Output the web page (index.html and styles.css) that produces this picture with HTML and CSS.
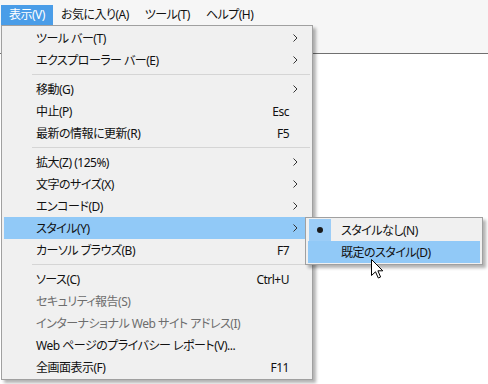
FILE: index.html
```html
<!DOCTYPE html>
<html lang="ja">
<head>
    <meta charset="UTF-8">
    <title>表示メニュー</title>
    <link rel="stylesheet" href="styles.css">
</head>
<body>
    <div class="chrome">
        <div class="menubar">
            <div class="menubar-item open">表示(V)</div>
            <div class="menubar-item">お気に入り(A)</div>
            <div class="menubar-item">ツール(T)</div>
            <div class="menubar-item">ヘルプ(H)</div>
        </div>
    </div>
    <div class="content"></div>

    <!-- 表示 dropdown -->
    <div class="menu main-menu">
        <div class="item"><span class="label">ツール バー(T)</span><span class="arrow"><svg width="5" height="8" viewBox="0 0 5 8"><path d="M0.5 0.5 L4 4 L0.5 7.5" fill="none" stroke="#333" stroke-width="1"/></svg></span></div>
        <div class="item"><span class="label">エクスプローラー バー(E)</span><span class="arrow"><svg width="5" height="8" viewBox="0 0 5 8"><path d="M0.5 0.5 L4 4 L0.5 7.5" fill="none" stroke="#333" stroke-width="1"/></svg></span></div>
        <div class="sep"></div>
        <div class="item"><span class="label">移動(G)</span><span class="arrow"><svg width="5" height="8" viewBox="0 0 5 8"><path d="M0.5 0.5 L4 4 L0.5 7.5" fill="none" stroke="#333" stroke-width="1"/></svg></span></div>
        <div class="item"><span class="label">中止(P)</span><span class="key">Esc</span><span class="arrow"></span></div>
        <div class="item"><span class="label">最新の情報に更新(R)</span><span class="key">F5</span><span class="arrow"></span></div>
        <div class="sep"></div>
        <div class="item"><span class="label">拡大(Z) (125%)</span><span class="arrow"><svg width="5" height="8" viewBox="0 0 5 8"><path d="M0.5 0.5 L4 4 L0.5 7.5" fill="none" stroke="#333" stroke-width="1"/></svg></span></div>
        <div class="item"><span class="label">文字のサイズ(X)</span><span class="arrow"><svg width="5" height="8" viewBox="0 0 5 8"><path d="M0.5 0.5 L4 4 L0.5 7.5" fill="none" stroke="#333" stroke-width="1"/></svg></span></div>
        <div class="item"><span class="label">エンコード(D)</span><span class="arrow"><svg width="5" height="8" viewBox="0 0 5 8"><path d="M0.5 0.5 L4 4 L0.5 7.5" fill="none" stroke="#333" stroke-width="1"/></svg></span></div>
        <div class="item active"><span class="label">スタイル(Y)</span><span class="arrow"><svg width="5" height="8" viewBox="0 0 5 8"><path d="M0.5 0.5 L4 4 L0.5 7.5" fill="none" stroke="#333" stroke-width="1"/></svg></span></div>
        <div class="item"><span class="label">カーソル ブラウズ(B)</span><span class="key">F7</span><span class="arrow"></span></div>
        <div class="sep"></div>
        <div class="item"><span class="label">ソース(C)</span><span class="key">Ctrl+U</span><span class="arrow"></span></div>
        <div class="item disabled"><span class="label">セキュリティ報告(S)</span><span class="arrow"></span></div>
        <div class="item disabled"><span class="label">インターナショナル Web サイト アドレス(I)</span><span class="arrow"></span></div>
        <div class="item"><span class="label">Web ページのプライバシー レポート(V)...</span><span class="arrow"></span></div>
        <div class="item"><span class="label">全画面表示(F)</span><span class="key">F11</span><span class="arrow"></span></div>
    </div>

    <!-- スタイル submenu -->
    <div class="menu sub-menu">
        <div class="subitem"><span class="check on"><span class="dot"></span></span><span class="label">スタイルなし(N)</span></div>
        <div class="subitem active"><span class="check"></span><span class="label">既定のスタイル(D)</span></div>
    </div>

    <svg class="cursor" width="13" height="20" viewBox="0 0 13 20">
        <path d="M0.5 0.5 L0.5 16.5 L4.5 12.8 L7.3 19 L9.6 18 L6.9 11.8 L11.8 11.8 Z" fill="#fff" stroke="#000" stroke-width="1" stroke-linejoin="round"/>
    </svg>
</body>
</html>
```

FILE: styles.css
```css
/* Windows-style menu */
body {
    margin: 0;
    background: #fff;
    font-family: "Noto Sans", "Noto Sans CJK JP", sans-serif;
    font-size: 12px;
    font-feature-settings: "palt";
    letter-spacing: -0.5px;
    color: #111;
    position: relative;
    height: 384px;
    overflow: hidden;
}

.chrome {
    height: 53px;
    background: #f6f6f6;
    border-bottom: 1px solid #707070;
}

.menubar {
    display: flex;
    padding: 5px 0 0 1px;
}

.menubar-item {
    height: 20px;
    line-height: 20px;
    padding: 0 8px;
}

.menubar-item.open {
    background: #4a9de8;
    color: #fff;
}

.menu {
    position: absolute;
    background: #f0f0f0;
    border: 1px solid #a0a0a0;
    box-shadow: 3px 3px 3px rgba(0, 0, 0, 0.3);
    padding: 1px 2px;
}

.main-menu {
    left: 1px;
    top: 25px;
    width: 306px;
}

.item {
    display: flex;
    align-items: center;
    height: 22px;
    padding: 0 12px 0 32px;
}

.item .label {
    flex: 1;
    white-space: nowrap;
}

.item .key {
    white-space: nowrap;
}

.item .arrow {
    width: 9px;
    display: flex;
    justify-content: flex-end;
}

.item.active {
    background: #91c9f7;
}

.item.disabled {
    color: #6d6d6d;
}

.sep {
    height: 7px;
    margin-left: 28px;
    display: flex;
    align-items: center;
}

.sep::before {
    content: "";
    flex: 1;
    border-top: 1px solid #d5d5d5;
}

.sub-menu {
    left: 305px;
    top: 217px;
    width: 172px;
}

.subitem {
    display: flex;
    align-items: center;
    height: 22px;
    padding-left: 1px;
}

.subitem.active {
    background: #91c9f7;
}

.check {
    width: 22px;
    height: 22px;
    display: flex;
    align-items: center;
    justify-content: center;
    margin-right: 10px;
}

.check.on {
    background: #9ccdf7;
}

.dot {
    width: 6px;
    height: 6px;
    border-radius: 50%;
    background: #1a1a1a;
}

.cursor {
    position: absolute;
    left: 371px;
    top: 259px;
}
```
